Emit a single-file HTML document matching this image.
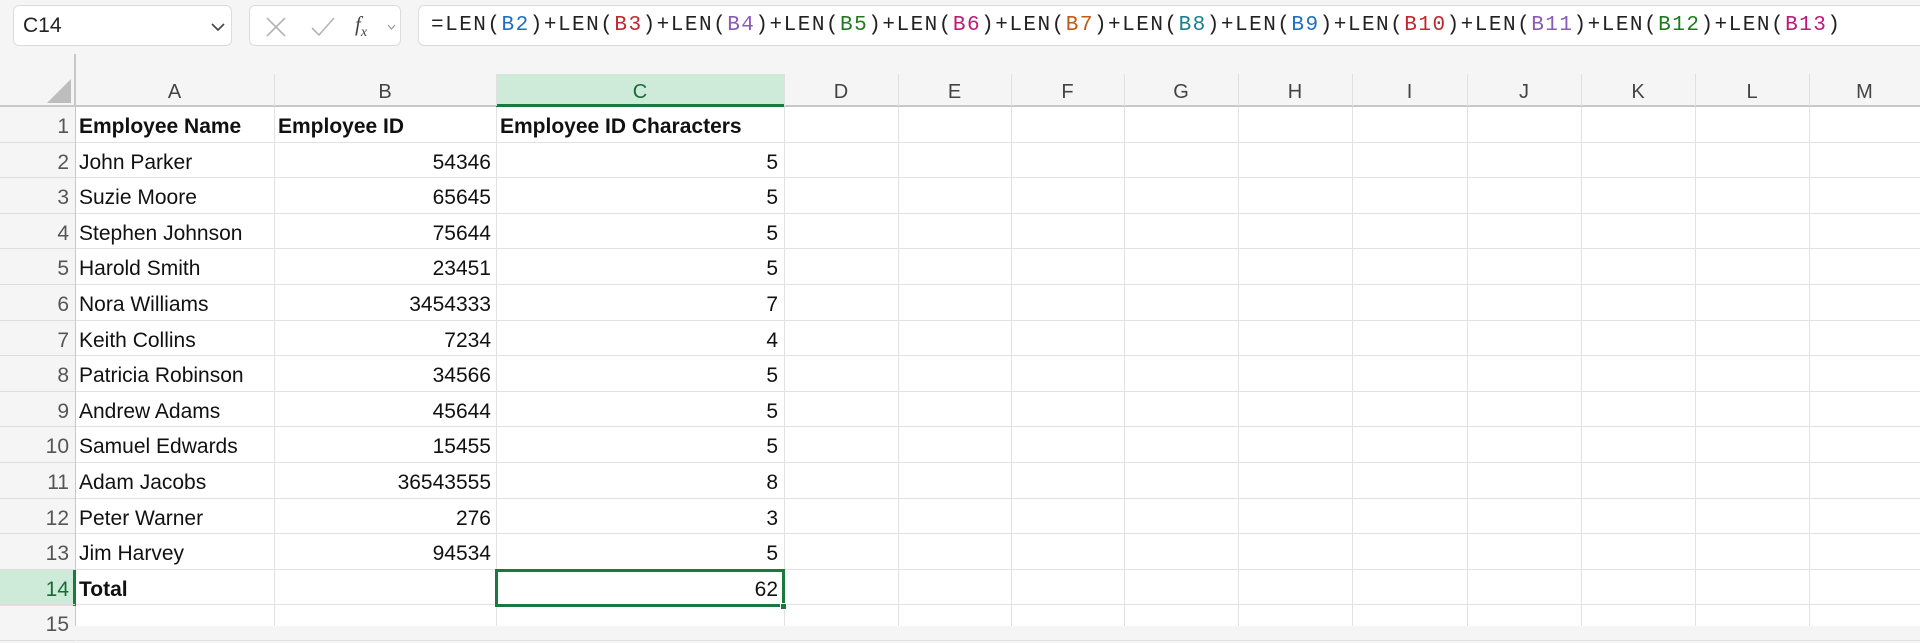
<!DOCTYPE html>
<html><head><meta charset="utf-8"><style>
*{margin:0;padding:0;box-sizing:border-box}
body{width:1920px;height:626px;background:#f5f5f5;font-family:"Liberation Sans",sans-serif;position:relative;overflow:hidden}
.box{position:absolute;background:#fff;border:1px solid #dcdcdc;border-radius:6px}
.mono{font-family:"Liberation Mono",monospace}
.c{position:absolute;font-size:21px;color:#111;white-space:nowrap;line-height:35.6px;padding-top:2px}
.hl{position:absolute;background:#dadada}
</style></head><body>
<div class="box" style="left:13px;top:5px;width:219px;height:41px"><span style="position:absolute;left:9px;top:8px;font-size:21px;color:#222">C14</span>
<svg style="position:absolute;left:197px;top:16px" width="14" height="10"><path d="M1 2 L7 8 L13 2" fill="none" stroke="#444" stroke-width="1.6"/></svg></div>
<div class="box" style="left:249px;top:5px;width:152px;height:41px">
<svg style="position:absolute;left:14px;top:9px" width="24" height="24"><path d="M3 3L21 21M21 3L3 21" stroke="#b5b5b5" stroke-width="1.6"/></svg>
<svg style="position:absolute;left:60px;top:9px" width="26" height="24"><path d="M2 13L9 20L24 3" fill="none" stroke="#b5b5b5" stroke-width="1.6"/></svg>
<span style="position:absolute;left:105px;top:6px;font-size:21px;font-style:italic;font-family:'Liberation Serif',serif;color:#444">f<sub style="font-size:14px">x</sub></span>
<svg style="position:absolute;left:137px;top:18px" width="9" height="6"><path d="M1 1L4.5 5L8 1" fill="none" stroke="#999" stroke-width="1.2"/></svg></div>
<div class="box" style="left:418px;top:5px;width:1510px;height:41px;border-radius:6px 0 0 6px"><span class="mono" style="position:absolute;left:12px;top:8px;font-size:21px;color:#222;letter-spacing:1.5px">=LEN(<span style="color:#1f6fc1">B2</span>)+LEN(<span style="color:#c4262e">B3</span>)+LEN(<span style="color:#8a5bb5">B4</span>)+LEN(<span style="color:#1f7a1f">B5</span>)+LEN(<span style="color:#c0187a">B6</span>)+LEN(<span style="color:#c05a14">B7</span>)+LEN(<span style="color:#1a7f8e">B8</span>)+LEN(<span style="color:#1f6fc1">B9</span>)+LEN(<span style="color:#c4262e">B10</span>)+LEN(<span style="color:#8a5bb5">B11</span>)+LEN(<span style="color:#1f7a1f">B12</span>)+LEN(<span style="color:#c0187a">B13</span>)</span></div>
<div style="position:absolute;left:74px;top:54px;width:2px;height:53px;background:#c8c8c8"></div>
<svg style="position:absolute;left:47px;top:79px" width="24" height="24"><path d="M24 0L24 24L0 24Z" fill="#bdbdbd"/></svg>
<div style="position:absolute;left:0;top:106px;width:1920px;height:520px;background:#fff"></div>
<div style="position:absolute;left:0;top:105px;width:1920px;height:2px;background:#c8c8c8"></div>
<div style="position:absolute;left:0;top:107px;width:75px;height:519px;background:#f5f5f5"></div>
<div style="position:absolute;left:75px;top:107px;width:1px;height:519px;background:#c8c8c8"></div>
<div style="position:absolute;left:496px;top:74px;width:288px;height:32px;background:#cdebd8"></div>
<div style="position:absolute;left:496px;top:104px;width:288px;height:3px;background:#1a7a3e"></div>
<div style="position:absolute;left:0;top:570px;width:75px;height:36px;background:#cdebd8"></div>
<div style="position:absolute;left:73px;top:570px;width:3px;height:36px;background:#1a7a3e"></div>
<div id="v"></div>
<script>
var cols=[75,274,496,784,898,1011,1124,1238,1352,1467,1581,1695,1809,1920];
var L="ABCDEFGHIJKLM";
var h="";
for(var i=0;i<13;i++){var a=cols[i],b=cols[i+1];
h+='<div class="c" style="left:'+a+'px;width:'+(b-a)+'px;top:76px;line-height:32px;padding-top:0;text-align:center;font-size:20px;color:'+(i==2?'#1a6b38':'#444')+'">'+L[i]+'</div>';
if(i>0)h+='<div class="hl" style="left:'+a+'px;top:74px;width:1px;height:32px;background:#e0e0e0"></div>';
h+='<div class="hl" style="left:'+b+'px;top:107px;width:1px;height:519px;background:#e2e2e2"></div>';}
var rh=35.6,top0=107;
var d=[["Employee Name","Employee ID","Employee ID Characters"],["John Parker","54346","5"],["Suzie Moore","65645","5"],["Stephen Johnson","75644","5"],["Harold Smith","23451","5"],["Nora Williams","3454333","7"],["Keith Collins","7234","4"],["Patricia Robinson","34566","5"],["Andrew Adams","45644","5"],["Samuel Edwards","15455","5"],["Adam Jacobs","36543555","8"],["Peter Warner","276","3"],["Jim Harvey","94534","5"],["Total","","62"]];
for(var r=0;r<15;r++){var y=top0+r*rh;
h+='<div class="c" style="left:0;width:69px;text-align:right;top:'+y+'px;color:'+(r==13?'#1a6b38':'#555')+'">'+(r+1)+'</div>';
h+='<div class="hl" style="left:76px;top:'+(y+rh-1)+'px;width:1844px;height:1px;background:#e2e2e2"></div>';
h+='<div class="hl" style="left:0;top:'+(y+rh-1)+'px;width:75px;height:1px;background:#dcdcdc"></div>';
if(r<14){var row=d[r],bold=(r==0||r==13)?'font-weight:bold;':'';
h+='<div class="c" style="left:79px;top:'+y+'px;'+bold+'">'+row[0]+'</div>';
if(r==0){h+='<div class="c" style="left:278px;top:'+y+'px;'+bold+'">'+row[1]+'</div>';h+='<div class="c" style="left:500px;top:'+y+'px;'+bold+'">'+row[2]+'</div>';}
else{h+='<div class="c" style="left:274px;width:217px;text-align:right;top:'+y+'px">'+row[1]+'</div>';h+='<div class="c" style="left:496px;width:282px;text-align:right;top:'+y+'px">'+row[2]+'</div>';}}}
h+='<div style="position:absolute;left:495px;top:569px;width:290px;height:38px;border:3px solid #1a7a3e"></div>';
h+='<div style="position:absolute;left:780px;top:603px;width:7px;height:7px;background:#1a7a3e;border:1px solid #fff"></div>';
document.getElementById('v').innerHTML=h;
</script>
</body></html>
